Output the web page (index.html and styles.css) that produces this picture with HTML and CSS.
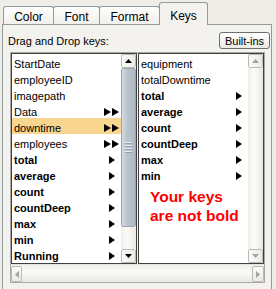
FILE: index.html
```html
<!DOCTYPE html>
<html>
<head>
<meta charset="utf-8">
<link rel="stylesheet" href="styles.css">
</head>
<body>
<div class="tabs">
  <div class="tab t-color">Color</div>
  <div class="tab t-font">Font</div>
  <div class="tab t-format">Format</div>
  <div class="tab t-keys sel">Keys</div>
</div>
<div class="panel">
  <div class="head">
    <span class="label">Drag and Drop keys:</span>
    <button class="btn">Built-ins</button>
  </div>
  <div class="pane">
    <div class="lists">
      <div class="list">
        <div class="items">
          <div class="row"><span>StartDate</span></div>
          <div class="row"><span>employeeID</span></div>
          <div class="row"><span>imagepath</span></div>
          <div class="row dbl"><span>Data</span><svg class="arr2" width="15" height="8" viewBox="0 0 15 8"><polygon points="0,0 7,4 0,8"/><polygon points="8,0 15,4 8,8"/></svg></div>
          <div class="row dbl hl"><span>downtime</span><svg class="arr2" width="15" height="8" viewBox="0 0 15 8"><polygon points="0,0 7,4 0,8"/><polygon points="8,0 15,4 8,8"/></svg></div>
          <div class="row dbl"><span>employees</span><svg class="arr2" width="15" height="8" viewBox="0 0 15 8"><polygon points="0,0 7,4 0,8"/><polygon points="8,0 15,4 8,8"/></svg></div>
          <div class="row b"><span>total</span><svg class="arr" width="6" height="8" viewBox="0 0 6 8"><polygon points="0,0 6,4 0,8"/></svg></div>
          <div class="row b"><span>average</span><svg class="arr" width="6" height="8" viewBox="0 0 6 8"><polygon points="0,0 6,4 0,8"/></svg></div>
          <div class="row b"><span>count</span><svg class="arr" width="6" height="8" viewBox="0 0 6 8"><polygon points="0,0 6,4 0,8"/></svg></div>
          <div class="row b"><span>countDeep</span><svg class="arr" width="6" height="8" viewBox="0 0 6 8"><polygon points="0,0 6,4 0,8"/></svg></div>
          <div class="row b"><span>max</span><svg class="arr" width="6" height="8" viewBox="0 0 6 8"><polygon points="0,0 6,4 0,8"/></svg></div>
          <div class="row b"><span>min</span><svg class="arr" width="6" height="8" viewBox="0 0 6 8"><polygon points="0,0 6,4 0,8"/></svg></div>
          <div class="row b"><span>Running</span><svg class="arr" width="6" height="8" viewBox="0 0 6 8"><polygon points="0,0 6,4 0,8"/></svg></div>
        </div>
        <div class="vscroll">
          <div class="sbtn"><svg width="7" height="4" viewBox="0 0 7 4"><polygon points="0,4 3.5,0 7,4"/></svg></div>
          <div class="thumb"><div class="grip"></div></div>
          <div class="track"></div>
          <div class="sbtn"><svg width="7" height="4" viewBox="0 0 7 4"><polygon points="0,0 7,0 3.5,4"/></svg></div>
        </div>
      </div>
      <div class="list">
        <div class="items">
          <div class="row"><span>equipment</span></div>
          <div class="row"><span>totalDowntime</span></div>
          <div class="row b"><span>total</span><svg class="arr" width="6" height="8" viewBox="0 0 6 8"><polygon points="0,0 6,4 0,8"/></svg></div>
          <div class="row b"><span>average</span><svg class="arr" width="6" height="8" viewBox="0 0 6 8"><polygon points="0,0 6,4 0,8"/></svg></div>
          <div class="row b"><span>count</span><svg class="arr" width="6" height="8" viewBox="0 0 6 8"><polygon points="0,0 6,4 0,8"/></svg></div>
          <div class="row b"><span>countDeep</span><svg class="arr" width="6" height="8" viewBox="0 0 6 8"><polygon points="0,0 6,4 0,8"/></svg></div>
          <div class="row b"><span>max</span><svg class="arr" width="6" height="8" viewBox="0 0 6 8"><polygon points="0,0 6,4 0,8"/></svg></div>
          <div class="row b"><span>min</span><svg class="arr" width="6" height="8" viewBox="0 0 6 8"><polygon points="0,0 6,4 0,8"/></svg></div>
          <div class="note">Your keys<br>are not bold</div>
        </div>
        <div class="vscroll">
          <div class="sbtn dis"><svg width="7" height="4" viewBox="0 0 7 4"><polygon points="0,4 3.5,0 7,4"/></svg></div>
          <div class="track"></div>
          <div class="sbtn dis"><svg width="7" height="4" viewBox="0 0 7 4"><polygon points="0,0 7,0 3.5,4"/></svg></div>
        </div>
      </div>
    </div>
    <div class="hscroll">
      <div class="hbtn dis l"><svg width="4" height="7" viewBox="0 0 4 7"><polygon points="4,0 4,7 0,3.5"/></svg></div>
      <div class="htrack"></div>
      <div class="hbtn dis r"><svg width="4" height="7" viewBox="0 0 4 7"><polygon points="0,0 4,3.5 0,7"/></svg></div>
    </div>
  </div>
</div>
</body>
</html>
```

FILE: styles.css
```css
* { box-sizing: border-box; margin: 0; padding: 0; }

body {
  width: 276px;
  height: 289px;
  overflow: hidden;
  background: #eeede8;
  font-family: "Liberation Sans", Arial, sans-serif;
  font-size: 11px;
  color: #000;
}

.tabs {
  display: flex;
  align-items: flex-start;
  height: 24px;
  padding-left: 3px;
  position: relative;
  z-index: 2;
}

.tab {
  height: 18px;
  margin-top: 6px;
  margin-right: -1px;
  border: 1px solid #919b9c;
  border-bottom: none;
  border-radius: 3px 3px 0 0;
  background: linear-gradient(#fdfdfc, #f1f0eb);
  font-size: 12px;
  line-height: 14px;
  padding-top: 3px;
  text-align: center;
  color: #000;
}

.t-color { width: 51px; }
.t-font { width: 47px; }
.t-format { width: 61px; }
.t-keys { width: 49px; }

.tab.sel {
  height: 23px;
  margin-top: 2px;
  padding-top: 6px;
  background: #f3f2ee;
  border-color: #919b9c;
}

.panel {
  margin-left: 2px;
  width: 270px;
  height: 265px;
  border: 1px solid #919b9c;
  border-bottom: none;
  background: #f3f2ee;
  position: relative;
  z-index: 1;
}

.head {
  display: flex;
  justify-content: space-between;
  align-items: center;
  padding: 7px 1px 0 5px;
}

.label {
  font-size: 11px;
  line-height: 13px;
  padding-top: 1px;
}

.btn {
  width: 51px;
  height: 17px;
  border: 1px solid #6e6e6e;
  border-radius: 3px;
  background: linear-gradient(#ffffff, #eceae4);
  font-family: "Liberation Sans", Arial, sans-serif;
  font-size: 11px;
  color: #000;
  line-height: 14px;
}

.pane {
  margin: 3px 0 0 7px;
  width: 255px;
  border: 1px solid #a9a8a4;
  background: #f3f2ee;
}

.lists {
  display: flex;
  gap: 1px;
}

.list {
  width: 126px;
  height: 211px;
  border: 1px solid #404040;
  background: #fff;
  display: flex;
}

.items {
  flex: 1;
  min-width: 0;
}

.row {
  height: 16px;
  display: flex;
  justify-content: space-between;
  align-items: flex-start;
  padding: 4px 6px 0 2px;
  line-height: 12px;
  white-space: nowrap;
}

.row.dbl { padding-right: 2px; }
.row.b { font-weight: bold; }
.row.hl { background: #f8d68f; }

.arr, .arr2 {
  margin-top: 2px;
  fill: #000;
  flex: none;
}

.note {
  color: #ff0000;
  font-weight: bold;
  font-size: 15.5px;
  line-height: 19px;
  padding-left: 11px;
  margin-top: 5px;
}

.vscroll {
  width: 15px;
  display: flex;
  flex-direction: column;
  background: #fff;
}

.sbtn {
  height: 14px;
  border: 1px solid #bcbab4;
  border-radius: 2px;
  background: linear-gradient(to right, #fbfbf9, #ebeae4);
  display: flex;
  align-items: center;
  justify-content: center;
  flex: none;
}

.sbtn svg { fill: #000; }
.sbtn.dis svg { fill: #a5a39e; }

.thumb {
  height: 159px;
  flex: none;
  border: 1px solid #9aa6b0;
  border-radius: 2px;
  background: linear-gradient(to right, #d4dce3, #b9c4cd 40%, #aeb9c3);
  display: flex;
  align-items: center;
  justify-content: center;
}

.grip {
  width: 7px;
  height: 11px;
  background: repeating-linear-gradient(#e6ebef 0 1px, #95a1ab 1px 2px, transparent 2px 3px);
}

.track {
  flex: 1;
  background: linear-gradient(to right, #eeede8, #fbfbf9 40%, #e9e8e2);
}

.hscroll {
  height: 18px;
  display: flex;
  padding-top: 1px;
  background: linear-gradient(#f0efea, #fbfbf9 40%, #e9e8e2);
  border-top: 1px solid #e4e3de;
}

.hbtn {
  height: 16px;
  border: 1px solid #bcbab4;
  border-radius: 2px;
  background: linear-gradient(#fbfbf9, #ebeae4);
  display: flex;
  align-items: center;
  justify-content: center;
}

.hbtn.l { width: 11px; }
.hbtn.r { width: 12px; }
.hbtn svg { fill: #a5a39e; }

.htrack { flex: 1; }
```
